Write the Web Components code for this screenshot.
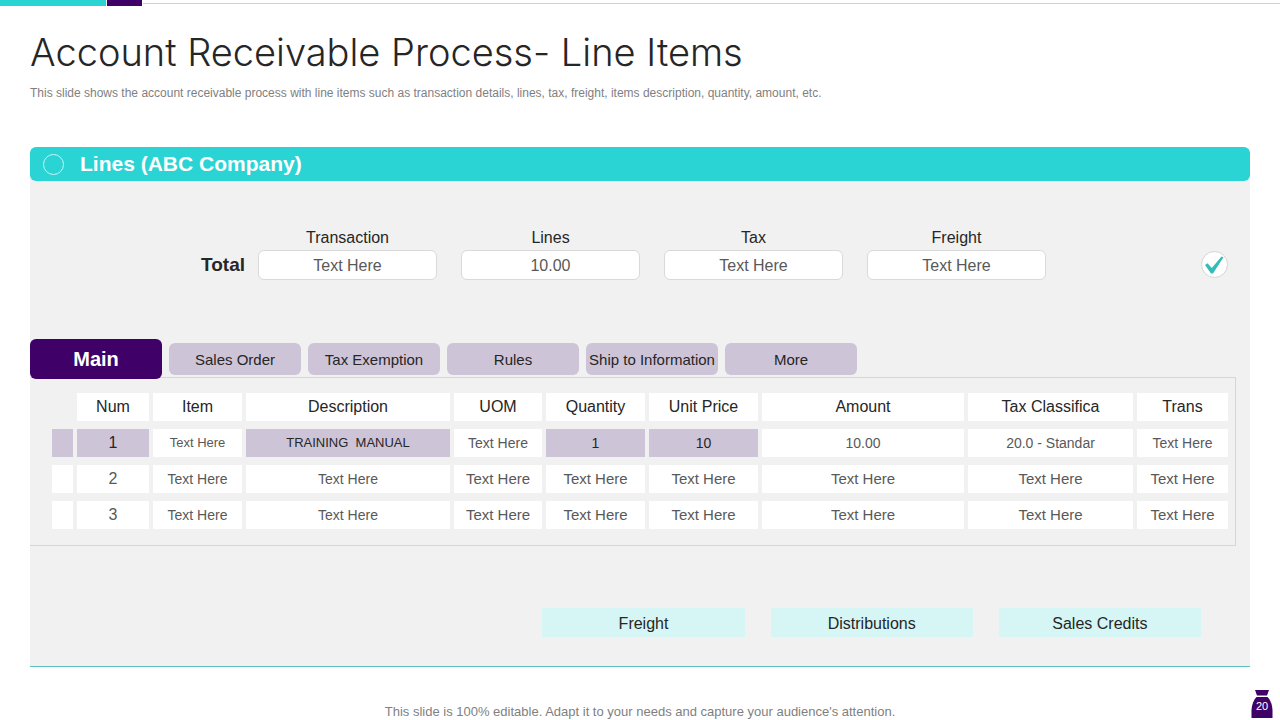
<!DOCTYPE html>
<html lang="en">
<head>
<meta charset="utf-8">
<title>Account Receivable Process- Line Items</title>
<style>
  body {
    margin: 0;
    background: #fff;
    color: #262626;
    font-family: "Liberation Sans", Arial, sans-serif;
    font-size: 16px;
  }
</style>
</head>
<body>
<slide-page>
  <slide-heading slot="heading">
    <span slot="title">Account Receivable Process- Line Items</span>
    <span slot="subtitle">This slide shows the account receivable process with line items such as transaction details, lines, tax, freight, items description, quantity, amount, etc.</span>
  </slide-heading>
  <lines-panel caption="Lines (ABC Company)">
    <totals-row></totals-row>
    <tab-strip></tab-strip>
    <line-items></line-items>
    <action-bar></action-bar>
  </lines-panel>
  <span slot="note">This slide is 100% editable. Adapt it to your needs and capture your audience's attention.</span>
  <page-badge slot="page">20</page-badge>
</slide-page>

<script>
const define = (name, html, setup) => {
  const template = document.createElement('template');
  template.innerHTML = html;
  customElements.define(name, class extends HTMLElement {
    constructor() {
      super();
      this.attachShadow({ mode: 'open' }).append(template.content.cloneNode(true));
    }
    connectedCallback() {
      if (setup) setup(this, this.shadowRoot);
    }
  });
};

define('slide-page', `
  <style>
    :host { display: flex; flex-direction: column; min-height: 100vh; }
    .stripe { display: flex; gap: 1px; height: 6px; }
    .teal { flex: 106; background: #2bd4d4; }
    .purple { flex: 35; background: #3f0068; }
    .rule { flex: 1138; height: 1px; margin-top: 3px; background: #d0d0d0; }
    main { flex: 1; padding: 0 30px; }
    footer { display: grid; grid-template-columns: 1fr auto 1fr; align-items: end; padding: 0 6px; }
    .note { grid-column: 2; color: #7f7f7f; font-size: 13px; line-height: 16px; }
    .page { justify-self: end; }
  </style>
  <div class="stripe"><div class="teal"></div><div class="purple"></div><div class="rule"></div></div>
  <main><slot name="heading"></slot><slot></slot></main>
  <footer><div class="note"><slot name="note"></slot></div><div class="page"><slot name="page"></slot></div></footer>
`);

define('slide-heading', `
  <style>
    :host { display: block; padding: 22px 0 46px; }
    h1 { margin: 0; font-family: Inter, sans-serif; font-weight: 300; font-size: 38px; line-height: 48px; white-space: nowrap; }
    p { margin: 9px 0 0; color: #7f7f7f; font-size: 12px; line-height: 16px; }
  </style>
  <h1><slot name="title"></slot></h1>
  <p><slot name="subtitle"></slot></p>
`);

define('lines-panel', `
  <style>
    :host { display: block; border-bottom: 1px solid #5bbfc4; background: linear-gradient(#fff 17px, #f1f1f1 17px); }
    header { display: flex; align-items: center; gap: 16px; height: 34px; padding-left: 13px; border-radius: 6px; background: #2bd4d4; color: #fff; }
    i { box-sizing: border-box; width: 21px; height: 21px; border: 1px solid #c8f4f4; border-radius: 50%; }
    h2 { margin: 0; font-size: 21px; line-height: 24px; }
  </style>
  <header><i></i><h2></h2></header>
  <slot></slot>
`, (host, root) => {
  root.querySelector('h2').textContent = host.getAttribute('caption');
});

define('totals-row', `
  <style>
    :host { display: grid; grid-template-columns: 228fr 788fr 204fr; align-items: end; padding: 47px 0 59px; }
    h3 { margin: 0; padding-right: 13px; text-align: right; font-size: 19px; line-height: 30px; }
    .fields { display: grid; grid-template-columns: repeat(4, minmax(0, 1fr)); gap: 24px; }
    label { display: block; padding-bottom: 3px; text-align: center; line-height: 19px; }
    input { box-sizing: border-box; display: block; width: 100%; height: 30px; padding: 2px 8px 0; border: 1px solid #d9d9d9; border-radius: 6px; background: #fff; color: #595959; font: inherit; text-align: center; }
    button { display: block; justify-self: end; margin: 0 22px 2px 0; padding: 0; border: 0; background: none; }
    svg { display: block; }
  </style>
  <h3>Total</h3>
  <div class="fields">
    <div><label for="transaction">Transaction</label><input id="transaction" value="Text Here"></div>
    <div><label for="lines">Lines</label><input id="lines" value="10.00"></div>
    <div><label for="tax">Tax</label><input id="tax" value="Text Here"></div>
    <div><label for="freight">Freight</label><input id="freight" value="Text Here"></div>
  </div>
  <button type="button" aria-label="Confirm">
    <svg width="27" height="27" viewBox="0 0 27 27"><circle cx="13.5" cy="13.5" r="13" fill="#fff" stroke="#d4d4d4"/><path d="M4 14 L6.5 12.3 L10.8 17 L20.5 5.5 L22.5 6.3 L12 22.5 L10 22.5 Z" fill="#33bdb9"/></svg>
  </button>
`);

define('tab-strip', `
  <style>
    :host { display: grid; grid-template-columns: repeat(6, 132fr) 386fr; column-gap: 7px; align-items: center; position: relative; margin-bottom: -2px; }
    button { height: 32px; padding: 0; border: 0; border-radius: 6px; background: #cdc4d8; color: #262626; font: inherit; font-size: 15px; white-space: nowrap; }
    button[aria-selected="true"] { height: 40px; background: #3f0068; color: #fff; font-size: 20px; font-weight: bold; }
  </style>
  <button type="button" role="tab" aria-selected="true">Main</button>
  <button type="button" role="tab">Sales Order</button>
  <button type="button" role="tab">Tax Exemption</button>
  <button type="button" role="tab">Rules</button>
  <button type="button" role="tab">Ship to Information</button>
  <button type="button" role="tab">More</button>
`);

define('line-items', `
  <style>
    :host { display: block; margin-right: 14px; padding: 7px 3px 8px 18px; border: 1px solid #d6d6d8; border-left: 0; }
    table { width: 100%; table-layout: fixed; border-spacing: 4px 8px; }
    th, td { height: 28px; padding: 0; background: #fff; text-align: center; white-space: pre; line-height: 20px; }
    th { font-weight: normal; }
    td { color: #595959; font-size: 15px; }
    td.num { font-size: 16px; }
    td.mid { font-size: 14px; }
    td.small { font-size: 13px; }
    td.on { background: #cdc4d8; color: #262626; }
    td.blank { background: none; }
  </style>
  <table>
    <colgroup></colgroup>
    <thead><tr><td class="blank"></td></tr></thead>
    <tbody></tbody>
  </table>
`, (host, root) => {
  const columns = [['', 21], ['Num', 72], ['Item', 89], ['Description', 204], ['UOM', 88], ['Quantity', 99],
    ['Unit Price', 109], ['Amount', 202], ['Tax Classifica', 165], ['Trans', 91]];
  const t = 'Text Here';
  const rows = [
    [['', 'on'], ['1', 'num on'], [t, 'small'], ['TRAINING  MANUAL', 'small on'], [t, 'mid'], ['1', 'mid on'],
      ['10', 'mid on'], ['10.00', 'mid'], ['20.0 - Standar', 'mid'], [t, 'mid']],
    [['', ''], ['2', 'num'], [t, 'mid'], [t, 'mid'], [t, ''], [t, ''], [t, ''], [t, ''], [t, ''], [t, '']],
    [['', ''], ['3', 'num'], [t, 'mid'], [t, 'mid'], [t, ''], [t, ''], [t, ''], [t, ''], [t, ''], [t, '']]
  ];
  const add = (parent, tag) => parent.appendChild(document.createElement(tag));
  const head = root.querySelector('thead tr');
  columns.forEach(([name, width]) => {
    add(root.querySelector('colgroup'), 'col').style.width = width + 'px';
    if (name) {
      const th = add(head, 'th');
      th.scope = 'col';
      th.textContent = name;
    }
  });
  rows.forEach(cells => {
    const tr = add(root.querySelector('tbody'), 'tr');
    cells.forEach(([text, cls]) => {
      const td = add(tr, 'td');
      td.className = cls;
      td.textContent = text;
    });
  });
});

define('action-bar', `
  <style>
    :host { display: grid; grid-template-columns: 486fr repeat(3, 202fr) 23fr; column-gap: 26px; padding: 62px 0 29px; }
    button { height: 29px; padding: 2px 0 0; border: 0; background: #d5f6f5; color: #262626; font: inherit; }
    button:first-of-type { grid-column: 2; }
  </style>
  <button type="button">Freight</button>
  <button type="button">Distributions</button>
  <button type="button">Sales Credits</button>
`);

define('page-badge', `
  <style>
    :host { display: grid; place-items: center; padding-bottom: 2px; color: #fff; font-size: 11px; line-height: 12px; }
    svg, span { grid-area: 1 / 1; }
    svg { display: block; }
    span { padding-top: 4px; }
  </style>
  <svg width="24" height="28" viewBox="0 0 24 28" fill="#3f0068"><path d="M5 0H19L17 5.5H7Z"/><path d="M6.5 7H17.5C20.5 10 22 14 22.5 20V28H1.5V20C2 14 3.5 10 6.5 7Z"/></svg>
  <span><slot></slot></span>
`);
</script>
</body>
</html>
